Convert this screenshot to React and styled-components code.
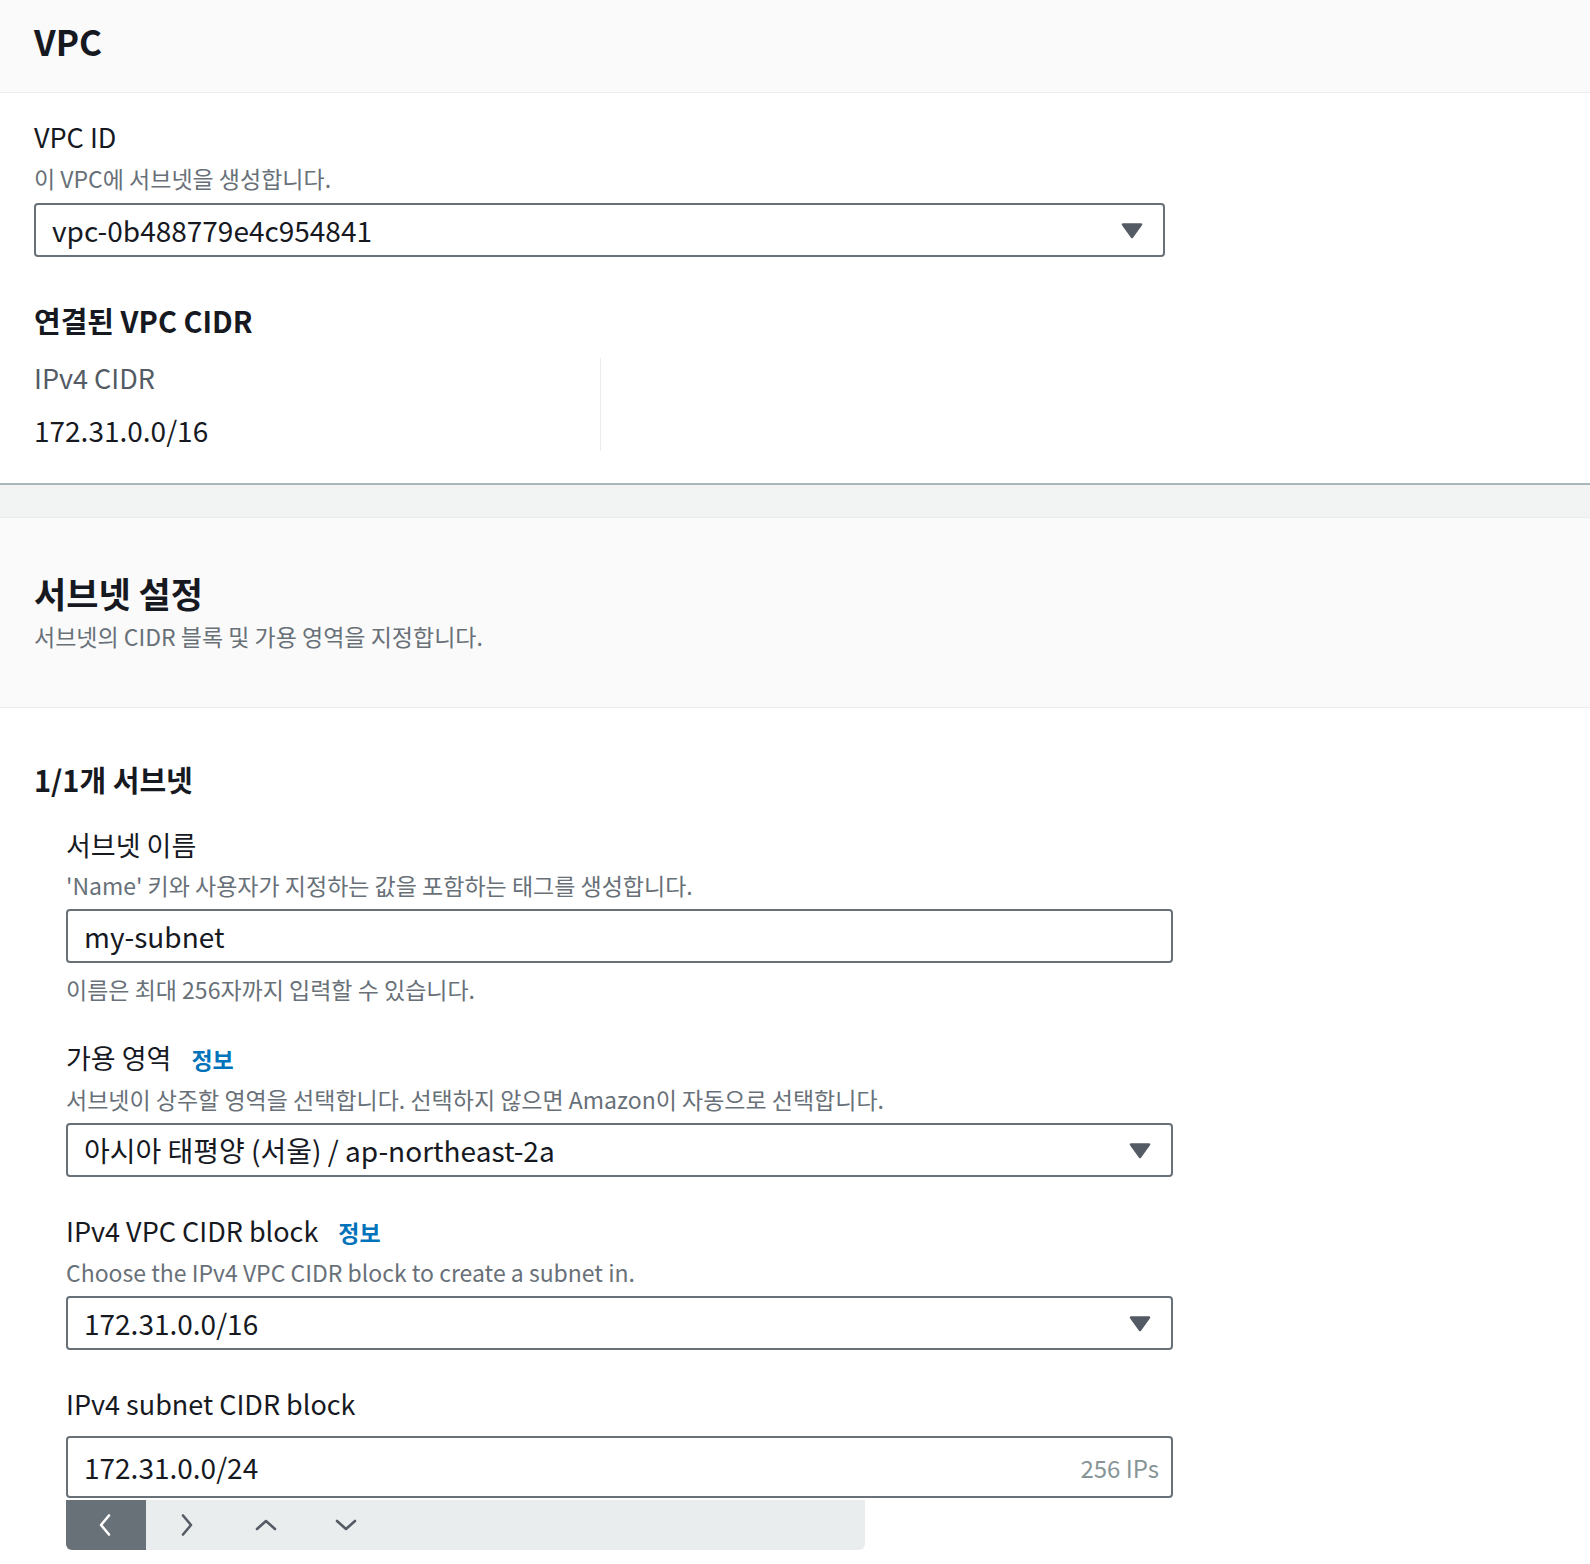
import React from "react";
import styled, { createGlobalStyle } from "styled-components";

const GlobalStyle = createGlobalStyle`
  html, body { margin: 0; padding: 0; background: #ffffff; }
  body {
    font-family: "Noto Sans CJK KR", "Noto Sans", sans-serif;
    color: #16191f;
    -webkit-font-smoothing: antialiased;
  }
  * { box-sizing: border-box; }
`;

const Page = styled.div`
  width: 1590px;
  min-height: 1564px;
  background: #f2f3f3;
  display: flex;
  flex-direction: column;
  gap: 32px;
`;

const Card = styled.section`
  background: #ffffff;
  border-top: ${(p) => (p.$topLine ? "1px solid #eaeded" : "none")};
  border-bottom: ${(p) => (p.$shadowLine ? "2px solid #aab7b8" : "none")};
  flex: ${(p) => (p.$grow ? 1 : "none")};
`;

const CardHeader = styled.header`
  background: #fafafa;
  border-bottom: 1px solid #eaeded;
  padding: ${(p) => p.$pad};
`;

const H2 = styled.h2`
  margin: 0;
  font-size: 35px;
  line-height: 44px;
  font-weight: 700;
  color: #16191f;
`;

const HeaderDesc = styled.p`
  margin: 6px 0 0;
  font-size: 23px;
  line-height: 30px;
  color: #687078;
`;

const CardBody = styled.div`
  padding: ${(p) => p.$pad};
`;

const H3 = styled.h3`
  margin: ${(p) => p.$mt || "0"} 0 0;
  font-size: 29px;
  line-height: 40px;
  font-weight: 700;
  color: #16191f;
`;

const Fields = styled.div`
  padding-left: 32px;
  display: flex;
  flex-direction: column;
`;

const Field = styled.div`
  margin-top: ${(p) => p.$mt};
  width: ${(p) => p.$w || "1107px"};
  display: flex;
  flex-direction: column;
`;

const Label = styled.div`
  font-size: 27px;
  line-height: 36px;
  color: #16191f;
  display: flex;
  align-items: baseline;
  gap: 20px;
`;

const InfoLink = styled.a`
  font-size: 23px;
  font-weight: 700;
  color: #0073bb;
  text-decoration: none;
`;

const Desc = styled.div`
  margin-top: ${(p) => p.$mt || "7px"};
  font-size: 23px;
  line-height: 30px;
  color: #687078;
`;

const Control = styled.div`
  margin-top: ${(p) => p.$mt || "9px"};
  height: ${(p) => p.$h || "54px"};
  border: 2px solid #687078;
  border-radius: 4px;
  background: #ffffff;
  display: flex;
  align-items: center;
  justify-content: space-between;
  padding: ${(p) => (p.$suffix ? "0 12px 0 16px" : "0 20px 0 16px")};
  font-size: 28px;
  color: #16191f;
`;

const Suffix = styled.span`
  font-size: 24px;
  color: #879596;
`;

const Caret = () => (
  <svg width="22" height="17" viewBox="0 0 22 17" aria-hidden="true">
    <path d="M2 2.5h18L11 15z" fill="#545b64" stroke="#545b64" strokeWidth="2.5" strokeLinejoin="round" />
  </svg>
);

const KVRow = styled.div`
  margin-top: 18px;
  display: flex;
`;

const KVCol = styled.div`
  width: 567px;
  border-right: 1px solid #eaeded;
  padding: 2px 0 3px;
  display: flex;
  flex-direction: column;
  gap: 16px;
`;

const Key = styled.div`
  font-size: 27px;
  line-height: 36px;
  color: #545b64;
`;

const Value = styled.div`
  font-size: 28px;
  line-height: 36px;
  color: #16191f;
`;

const Toolbar = styled.div`
  margin-top: 2px;
  width: 799px;
  height: 50px;
  background: #eaeded;
  border-radius: 0 0 6px 6px;
  display: flex;
  overflow: hidden;
`;

const ToolButton = styled.button`
  width: 80px;
  height: 50px;
  border: none;
  padding: 0;
  margin: 0;
  background: ${(p) => (p.$active ? "#687078" : "transparent")};
  display: flex;
  align-items: center;
  justify-content: center;
  cursor: pointer;
`;

const Chevron = ({ dir, color }) => {
  const paths = {
    left: "M15 2.5 L7 12 L15 21.5",
    right: "M9 2.5 L17 12 L9 21.5",
    up: "M3 16 L12 8 L21 16",
    down: "M3 8 L12 16 L21 8",
  };
  return (
    <svg width="24" height="24" viewBox="0 0 24 24" aria-hidden="true">
      <path d={paths[dir]} fill="none" stroke={color} strokeWidth="2.6" strokeLinecap="round" strokeLinejoin="round" />
    </svg>
  );
};

export default function App() {
  return (
    <>
      <GlobalStyle />
      <Page>
        <Card $shadowLine>
          <CardHeader $pad="19px 34px 29px">
            <H2>VPC</H2>
          </CardHeader>
          <CardBody $pad="26px 34px 32px">
            <Field $mt="0" $w="1131px">
              <Label>VPC ID</Label>
              <Desc $mt="8px">이 VPC에 서브넷을 생성합니다.</Desc>
              <Control $mt="10px">
                <span>vpc-0b488779e4c954841</span>
                <Caret />
              </Control>
            </Field>
            <H3 $mt="43px">연결된 VPC CIDR</H3>
            <KVRow>
              <KVCol>
                <Key>IPv4 CIDR</Key>
                <Value>172.31.0.0/16</Value>
              </KVCol>
            </KVRow>
          </CardBody>
        </Card>

        <Card $topLine $grow>
          <CardHeader $pad="53px 34px 56px">
            <H2>서브넷 설정</H2>
            <HeaderDesc>서브넷의 CIDR 블록 및 가용 영역을 지정합니다.</HeaderDesc>
          </CardHeader>
          <CardBody $pad="51px 34px 16px">
            <H3>1/1개 서브넷</H3>
            <Fields>
              <Field $mt="28px">
                <Label>서브넷 이름</Label>
                <Desc>'Name' 키와 사용자가 지정하는 값을 포함하는 태그를 생성합니다.</Desc>
                <Control>
                  <span>my-subnet</span>
                </Control>
                <Desc $mt="11px">이름은 최대 256자까지 입력할 수 있습니다.</Desc>
              </Field>
              <Field $mt="36px">
                <Label>
                  가용 영역 <InfoLink href="#">정보</InfoLink>
                </Label>
                <Desc>서브넷이 상주할 영역을 선택합니다. 선택하지 않으면 Amazon이 자동으로 선택합니다.</Desc>
                <Control>
                  <span>아시아 태평양 (서울) / ap-northeast-2a</span>
                  <Caret />
                </Control>
              </Field>
              <Field $mt="36px">
                <Label>
                  IPv4 VPC CIDR block <InfoLink href="#">정보</InfoLink>
                </Label>
                <Desc>Choose the IPv4 VPC CIDR block to create a subnet in.</Desc>
                <Control>
                  <span>172.31.0.0/16</span>
                  <Caret />
                </Control>
              </Field>
              <Field $mt="36px">
                <Label>IPv4 subnet CIDR block</Label>
                <Control $mt="14px" $h="62px" $suffix>
                  <span>172.31.0.0/24</span>
                  <Suffix>256 IPs</Suffix>
                </Control>
                <Toolbar>
                  <ToolButton $active aria-label="previous">
                    <Chevron dir="left" color="#ffffff" />
                  </ToolButton>
                  <ToolButton aria-label="next">
                    <Chevron dir="right" color="#545b64" />
                  </ToolButton>
                  <ToolButton aria-label="up">
                    <Chevron dir="up" color="#545b64" />
                  </ToolButton>
                  <ToolButton aria-label="down">
                    <Chevron dir="down" color="#545b64" />
                  </ToolButton>
                </Toolbar>
              </Field>
            </Fields>
          </CardBody>
        </Card>
      </Page>
    </>
  );
}
